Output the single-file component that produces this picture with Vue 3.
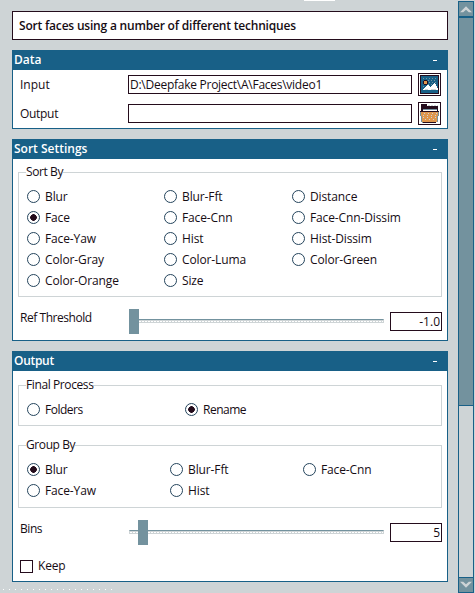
<script setup>
import { ref } from 'vue'

const sortOptions = ['Blur', 'Blur-Fft', 'Distance', 'Face', 'Face-Cnn', 'Face-Cnn-Dissim', 'Face-Yaw', 'Hist', 'Hist-Dissim', 'Color-Gray', 'Color-Luma', 'Color-Green', 'Color-Orange', 'Size']
const processOptions = ['Folders', 'Rename']
const groupOptions = ['Blur', 'Blur-Fft', 'Face-Cnn', 'Face-Yaw', 'Hist']
const sortBy = ref('Face')
const finalProcess = ref('Rename')
const groupBy = ref('Blur')
const input = ref('D:\\Deepfake Project\\A\\Faces\\video1')
const output = ref('')
const threshold = ref('-1.0')
const bins = ref('5')
const keep = ref(false)
</script>

<template>
  <div class="window">
    <i class="tab-edge"></i>
    <main class="content">
      <h1 class="title">Sort faces using a number of different techniques</h1>

      <section class="panel data">
        <header><span class="name">Data</span><i class="minus"></i></header>
        <div class="file-row">
          <label>Input</label>
          <input v-model="input" class="field path" type="text" />
          <button class="browse">
            <svg width="19" height="19" viewBox="0 0 19 19" shape-rendering="crispEdges">
              <rect width="19" height="19" fill="#240c1c" />
              <rect x="1" y="1" width="17" height="17" fill="#186087" />
              <path d="M3 3.5h13M5 5.5h12M9 7.5h8M8 9.5h6M3 11.5h3" stroke="#73929e" stroke-dasharray="1 2" />
              <path d="M4 5h3v1h1v3h-1v1h-3v-1h-1v-3h1z" fill="#240c1c" />
              <rect x="4" y="6" width="3" height="3" fill="#df964d" />
              <path d="M3 15v-1h1v-1h1v-1h1v-1h1v-1h2v1h1v1h1v-1h1v-1h1v-1h1v-1h1v1h1v2h1v2h1v2z" fill="#fff" />
              <path d="M5 14.5h3M11 14.5h5" stroke="#ced4d6" />
            </svg>
          </button>
        </div>
        <div class="file-row">
          <label class="output-label">Output</label>
          <input v-model="output" class="field" type="text" />
          <button class="browse">
            <svg width="19" height="19" viewBox="0 0 19 19" shape-rendering="crispEdges">
              <path d="M1 0h6v2h11v7H1z" fill="#240c1c" />
              <path d="M8 1.5h10" stroke="#ced4d6" stroke-dasharray="2 1" />
              <path d="M3 5h14v2H3z" fill="#fff" />
              <path d="M3 5.5h14" stroke="#73929e" />
              <path d="M0 8h1v4h1v6h1v1H2v-1H1v-6H0zM18 8h1v4h-1v6h-1v-6h1z" fill="#73929e" />
              <path d="M1 8h17v4h-1v6H2v-6H1z" fill="#df964d" />
              <path d="M4 9.5h13M3 13.5h13" stroke="#ced4d6" stroke-dasharray="1 3" />
              <path d="M3 11.5h14M5 15.5h11" stroke="#ced4d6" stroke-dasharray="1 3" />
              <path d="M0 7.5h19M3 18.5h13" stroke="#240c1c" />
            </svg>
          </button>
        </div>
      </section>

      <section class="panel sort">
        <header><span class="name">Sort Settings</span><i class="minus"></i></header>
        <div class="group sort-group">
          <span class="legend">Sort By</span>
          <div class="options sort-options">
            <label v-for="o in sortOptions" :key="o" class="option">
              <input v-model="sortBy" type="radio" name="sort" :value="o" /><span>{{ o }}</span>
            </label>
          </div>
        </div>
        <div class="slider-row">
          <label>Ref Threshold</label>
          <div class="slider"><i class="track"></i><i class="thumb"></i></div>
          <input v-model="threshold" class="field number" type="text" />
        </div>
      </section>

      <section class="panel result">
        <header><span class="name">Output</span><i class="minus"></i></header>
        <div class="group process-group">
          <span class="legend">Final Process</span>
          <div class="options process-options">
            <label v-for="o in processOptions" :key="o" class="option">
              <input v-model="finalProcess" type="radio" name="process" :value="o" /><span>{{ o }}</span>
            </label>
          </div>
        </div>
        <div class="group by-group">
          <span class="legend">Group By</span>
          <div class="options by-options">
            <label v-for="o in groupOptions" :key="o" class="option">
              <input v-model="groupBy" type="radio" name="group" :value="o" /><span>{{ o }}</span>
            </label>
          </div>
        </div>
        <div class="slider-row">
          <label>Bins</label>
          <div class="slider bins"><i class="track"></i><i class="thumb"></i></div>
          <input v-model="bins" class="field number" type="text" />
        </div>
        <label class="check"><input v-model="keep" type="checkbox" /><span>Keep</span></label>
      </section>
      <div class="dots"></div>
    </main>

    <aside class="scrollbar">
      <div class="arrow up">
        <svg width="14" height="14" viewBox="0 0 14 14"><path d="M1 10.3L7 4.2L13 10.3H9.8L7 7.8L4.2 10.3Z" fill="#ced4d6" /></svg>
      </div>
      <div class="grip"></div>
      <div class="trough"></div>
      <div class="arrow down">
        <svg width="14" height="14" viewBox="0 0 14 14"><path d="M1 3.7L7 9.8L13 3.7H9.8L7 6.2L4.2 3.7Z" fill="#ced4d6" /></svg>
      </div>
    </aside>
  </div>
</template>

<style>
body { margin: 0; background: #ced4d6; }
</style>

<style scoped>
* { box-sizing: border-box; }
.window {
  position: relative;
  display: flex;
  width: 475px;
  height: 593px;
  overflow: hidden;
  background: #ced4d6;
  color: #160c14;
  font: 12px/16px "Open Sans", "Noto Sans", sans-serif;
}
.tab-edge { position: absolute; left: 304px; top: 0; width: 31px; height: 1px; background: #fff; }
.content { display: flex; flex-direction: column; gap: 10px; width: 436px; margin: 11px 10px 0 12px; }
.title {
  height: 29px;
  flex: none;
  margin: 0;
  padding: 6px 6px 0;
  border: 1px solid #240c1c;
  background: #fff;
  font-size: 12px;
  line-height: 16px;
  font-weight: 600;
  letter-spacing: -0.2px;
  white-space: nowrap;
}
.panel { display: flex; flex-direction: column; flex: none; border: 1px solid #186087; border-top: 0; background: #fff; }
.data { height: 79px; }
.sort { height: 202px; }
.result { height: 231px; }
header {
  display: flex;
  flex: none;
  align-items: center;
  justify-content: space-between;
  height: 20px;
  margin: 0 -1px;
  padding: 0 11px 0 2px;
  background: #186087;
  color: #fff;
  font-weight: 600;
}
.result header { letter-spacing: -0.3px; }
.minus { width: 4px; height: 1px; margin-top: 1px; background: #fff; }
.file-row { display: flex; align-items: center; height: 23px; margin-top: 3px; padding: 0 6px 0 7px; }
.file-row + .file-row { margin-top: 6px; }
.file-row label { width: 108px; }
.output-label { letter-spacing: -0.3px; }
.field {
  width: 284px;
  height: 19px;
  margin: 0;
  padding: 0 1px;
  border: 1px solid #240c1c;
  border-radius: 0;
  outline: 0;
  background: #fff;
  color: inherit;
  font: inherit;
}
.path { letter-spacing: -0.26px; }
.browse { display: grid; place-items: center; width: 23px; height: 23px; margin: 0 0 0 6px; padding: 0; border: 1px solid #240c1c; background: #fff; }
.browse svg { display: block; }
.group { position: relative; flex: none; margin: 0 5px; border: 1px solid #ced4d6; }
.sort-group { height: 125px; margin-top: 13px; padding-top: 13px; }
.process-group { height: 41px; margin-top: 14px; padding-top: 13px; }
.by-group { height: 63px; margin-top: 19px; padding-top: 13px; }
.legend { position: absolute; left: 7px; top: -9px; height: 16px; background: #fff; letter-spacing: -0.4px; white-space: nowrap; }
.options { display: grid; grid-auto-rows: 21px; padding-left: 8px; letter-spacing: -0.12px; }
.sort-options { grid-template-columns: 137px 128px 1fr; }
.process-options { grid-template-columns: 158px 1fr; letter-spacing: -0.5px; }
.by-options { grid-template-columns: 143px 133px 1fr; }
.option { display: flex; align-items: center; gap: 5px; height: 21px; white-space: nowrap; }
.option input {
  appearance: none;
  width: 13px;
  height: 13px;
  margin: 0;
  border: 1px solid #24445c;
  border-radius: 50%;
  background: #fff;
}
.option input:checked { background: radial-gradient(circle, #240c1c 0 3px, #fff 3.6px); }
.slider-row { display: flex; flex: none; height: 25px; margin-top: 12px; padding: 0 5px 0 7px; }
.slider-row label { width: 109px; padding-top: 1px; letter-spacing: -0.45px; }
.slider { position: relative; width: 255px; height: 25px; padding-top: 10px; }
.track { display: block; height: 4px; border: 1px solid #ced4d6; border-top-color: #73929e; background: repeating-linear-gradient(90deg, #fff 0 2px, #ced4d6 2px 3px) 0 1px / 100% 1px no-repeat #ced4d6; }
.thumb { position: absolute; left: 0; top: 0; width: 10px; height: 25px; background: #73929e; }
.bins .thumb { left: 9px; }
.number { width: 52px; margin: 3px 0 0 6px; text-align: right; }
.check { display: flex; align-items: center; gap: 5px; height: 13px; margin: 15px 0 0 7px; letter-spacing: -0.2px; }
.check span { margin-top: -1px; }
.check input { appearance: none; width: 13px; height: 13px; margin: 0; border: 1px solid #240c1c; background: #fff; }
.dots { width: 112px; height: 1px; margin: -3px 0 0 -9px; background: repeating-linear-gradient(90deg, #fff 0 1px, transparent 1px 6px); }
.scrollbar { display: flex; flex-direction: column; width: 16px; height: 592px; margin-top: 1px; border: 1px solid #186087; }
.arrow { flex: none; height: 14px; background: #73929e; }
.arrow svg { display: block; }
.grip { flex: none; height: 390px; border: solid #186087; border-width: 2px 0 1px; background: #73929e; }
.trough { flex: 1; border-bottom: 1px solid #186087; }
</style>
